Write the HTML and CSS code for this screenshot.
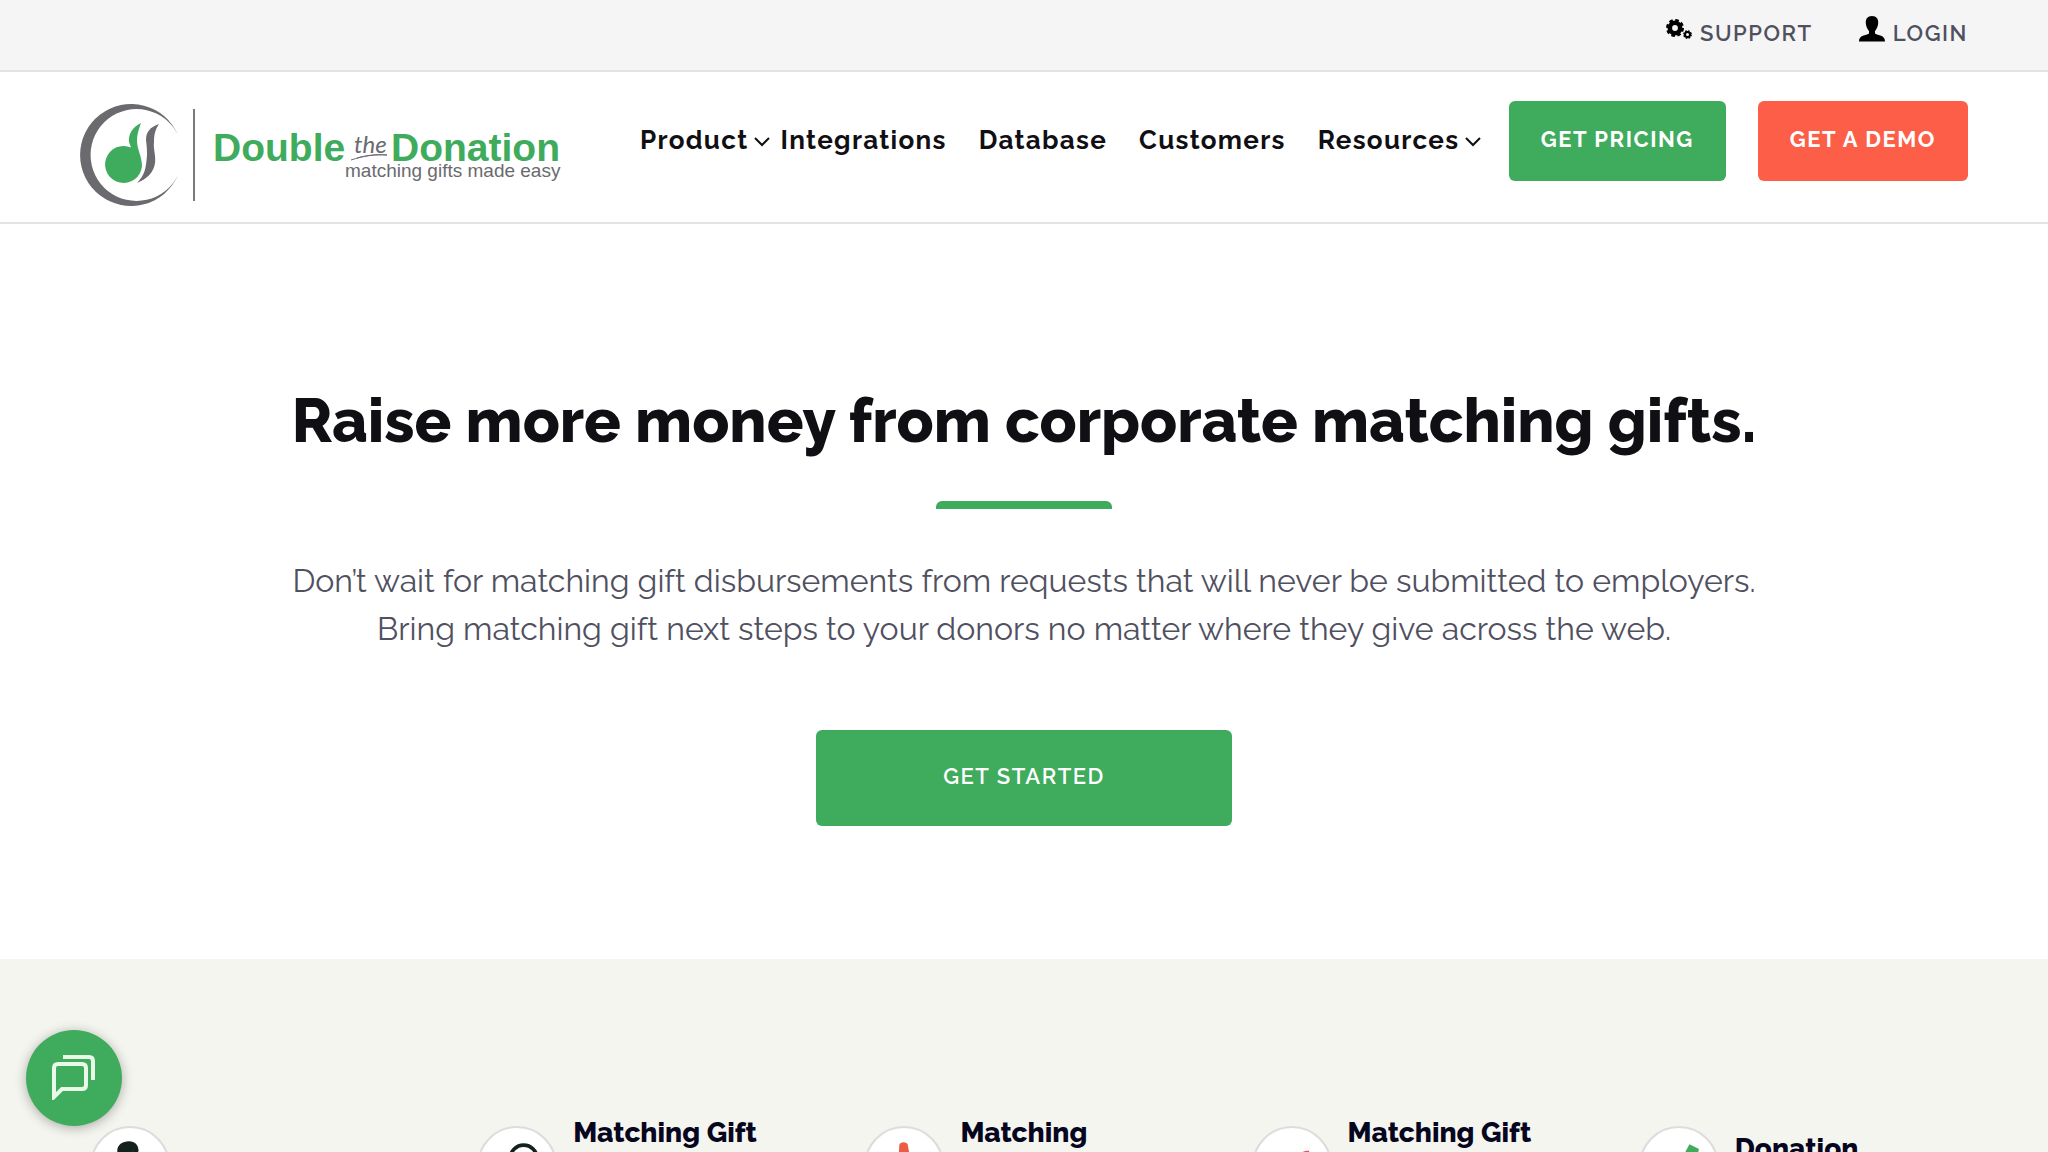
FILE: index.html
```html
<!DOCTYPE html>
<html lang="en">
<head>
    <meta charset="utf-8">
    <title>Double the Donation</title>
    <link rel="stylesheet" href="styles.css">
</head>
<body>

<!-- top bar -->
<div class="topbar">
    <a class="topbar-link" href="#">
        <svg class="icon-gears" viewBox="0 0 26 20" aria-hidden="true">
            <circle cx="9" cy="9" r="5.2" fill="none" stroke="#000" stroke-width="4.6"/>
            <circle cx="9" cy="9" r="7.5" fill="none" stroke="#000" stroke-width="3" stroke-dasharray="3.5 2.39"/>
            <circle cx="21.5" cy="15.5" r="2.5" fill="none" stroke="#000" stroke-width="2"/>
            <circle cx="21.5" cy="15.5" r="3.6" fill="none" stroke="#000" stroke-width="1.6" stroke-dasharray="1.7 1.13"/>
        </svg>
        SUPPORT
    </a>
    <a class="topbar-link" href="#">
        <svg class="icon-user" viewBox="0 0 26 26" aria-hidden="true">
            <path d="M13 0C8.500 0 6.500 3 6.800 7c.2 3.500 1.500 6 3.200 8v2.500C7 20 0 18.500 0 25.500h26c0-7-7-5.500-10-8V15c1.700-2 3-4.500 3.200-8C19.500 3 17.500 0 13 0z"/>
        </svg>
        LOGIN
    </a>
</div>

<!-- header -->
<header class="header">
    <a class="logo" href="#" aria-label="Double the Donation">
        <svg class="logo-svg" viewBox="0 0 484 104" aria-hidden="true">
            <path d="M98 31A51 51 0 1 0 98 71A46 46 0 1 1 98 31z" fill="#6b6a6e"/>
            <path d="M61 19C52 23 48 31 49 38l2 5.500A18.500 18.500 0 1 0 62 62C62 52 57 46 57 36c0-6 2-11 4-17z" fill="#3fab5d"/>
            <path d="M79 20c-9 3-13 8-13 16 1 8 1 10 1 15-1 13-2 20-10 28 10-4 17-11 18-20 1-8-2-14-1-21 0-7 1-12 5-18z" fill="#6b6a6e"/>
            <path d="M114 5v92" stroke="#7b7b7e" stroke-width="2"/>
            <text class="logo-name" x="133" y="57">Double</text>
            <text class="logo-the" x="274" y="49">the</text>
            <path d="M271 56c12-4 24-6 36-5-12-1-23 1-30 3" fill="none" stroke="#6b6a6e"/>
            <text class="logo-name" x="311" y="57">Donation</text>
            <text class="logo-tag" x="265" y="73">matching gifts made easy</text>
        </svg>
    </a>
    <nav class="nav">
        <a class="nav-link nav-drop" href="#">Product
            <svg class="icon-chevron" viewBox="0 0 16 10" aria-hidden="true"><path d="M1 1l7 7 7-7"/></svg>
        </a>
        <a class="nav-link" href="#">Integrations</a>
        <a class="nav-link" href="#">Database</a>
        <a class="nav-link" href="#">Customers</a>
        <a class="nav-link nav-drop" href="#">Resources
            <svg class="icon-chevron" viewBox="0 0 16 10" aria-hidden="true"><path d="M1 1l7 7 7-7"/></svg>
        </a>
    </nav>
    <div class="header-buttons">
        <a class="btn" href="#">GET PRICING</a>
        <a class="btn btn-demo" href="#">GET A DEMO</a>
    </div>
</header>

<!-- hero -->
<section class="hero">
    <h1 class="hero-title">Raise more money from corporate matching gifts.</h1>
    <div class="hero-line"></div>
    <p class="hero-text">Don’t wait for matching gift disbursements from requests that will never be submitted to employers.<br>
        Bring matching gift next steps to your donors no matter where they give across the web.</p>
    <a class="btn btn-start" href="#">GET STARTED</a>
</section>

<!-- features -->
<section class="features">
    <div class="feature">
        <span class="feature-icon">
            <svg viewBox="0 0 80 80" aria-hidden="true">
                <path d="M27 27c-2-8 4-13 12-13 6 0 10 4 10 10l-3 8c0-4-1-6-3-7-4 2-7 1-11 2l-2 7z" fill="#14211f"/>
            </svg>
        </span>
    </div>
    <div class="feature">
        <span class="feature-icon">
            <svg viewBox="0 0 80 80" aria-hidden="true">
                <circle cx="47" cy="32" r="14" fill="none" stroke="#14211f" stroke-width="4"/>
            </svg>
        </span>
        <h2 class="feature-title">Matching Gift</h2>
    </div>
    <div class="feature">
        <span class="feature-icon">
            <svg viewBox="0 0 80 80" aria-hidden="true">
                <path d="M34 40l1-22c1-4 8-4 9 0l4 22z" fill="#ec5c45"/>
            </svg>
        </span>
        <h2 class="feature-title">Matching</h2>
    </div>
    <div class="feature">
        <span class="feature-icon">
            <svg viewBox="0 0 80 80" aria-hidden="true">
                <path d="M42 34c3-6 8-10 16-10v10z" fill="#e0505a"/>
            </svg>
        </span>
        <h2 class="feature-title">Matching Gift</h2>
    </div>
    <div class="feature feature-single">
        <span class="feature-icon">
            <svg viewBox="0 0 80 80" aria-hidden="true">
                <path d="M42 34l9-17 10 5-3 14z" fill="#3fab5d"/>
            </svg>
        </span>
        <h2 class="feature-title">Donation</h2>
    </div>
</section>

<button class="chat" type="button" aria-label="Open chat">
    <svg class="icon-chat" viewBox="0 0 46 46" aria-hidden="true">
        <path d="M3 43V14q0-4 4-4h24q4 0 4 4v17q0 4-4 4H11z"/>
        <path d="M12 3h26q4 0 4 4v19"/>
    </svg>
</button>

</body>
</html>
```
FILE: styles.css
```css
*{box-sizing: border-box;}

body{
    margin: 0px;background: #fff;
    font-family: "Raleway", "Lato", "Open Sans", sans-serif;
    display: flex;flex-direction: column;
    height: 100vh;overflow: hidden;
}
a{text-decoration: none;}

/* top bar */
.topbar{
    flex: none;
    padding: 15px 80px 19px;
    display: flex;justify-content: flex-end;align-items: center;gap: 46px;
    background: #f5f5f5;border-bottom: 2px solid #e3e3e3;
}
.topbar-link{
    display: flex;align-items: center;gap: 8px;
    font-size: 22px;line-height: 36px;font-weight: 600;letter-spacing: 0.07em;color: #50505f;
}
.icon-gears{width: 26px;height: 20px;margin-bottom: 8px;}
.icon-user{width: 26px;height: 26px;margin-bottom: 8px;}

/* header */
.header{
    flex: none;
    padding: 29px 80px 14px;
    display: flex;align-items: flex-start;
    border-bottom: 2px solid #e3e3e3;
}
.logo{padding-top: 3px;}
.logo-svg{display: block;width: 484px;height: 104px;}
.logo-name{font: bold 39px "Liberation Sans", sans-serif;fill: #3fab5d;}
.logo-the{font: italic 24px "Lato", sans-serif;fill: #6b6a6e;}
.logo-tag{font: 19px "Liberation Sans", sans-serif;fill: #6b6a6e;}

.nav{display: flex;gap: 32px;margin-left: 76px;padding-top: 23px;}
.nav-link{
    display: flex;align-items: center;gap: 6px;
    font-size: 26px;line-height: 32px;font-weight: bold;letter-spacing: 0.05em;color: #101014;
}
.nav-drop{margin-right: -22px;}
.icon-chevron{width: 16px;height: 10px;margin-top: 4px;fill: none;stroke: #101014;stroke-width: 2;}

.header-buttons{display: flex;gap: 32px;margin-left: auto;}

/* buttons */
.btn{
    display: block;padding: 0px 32px 4px;line-height: 76px;
    border-radius: 6px;background: #3fab5d;
    font-size: 22px;font-weight: bold;letter-spacing: 0.07em;color: #fff;
}
.btn-demo{background: #fd5e48;}

/* hero */
.hero{
    flex: none;
    padding: 158px 80px 133px;
    display: flex;flex-direction: column;align-items: center;
    text-align: center;
}
.hero-title{margin: 0px;font-size: 61px;line-height: 78px;font-weight: 800;color: #101014;}
.hero-line{
    width: 176px;height: 8px;margin: 41px 0px 48px;
    border-radius: 6px 6px 0px 0px;background: #3fab5d;
}
.hero-text{margin: 0px 0px 77px;font-size: 32px;line-height: 48px;color: #50505f;}
.btn-start{width: 416px;line-height: 92px;font-weight: 600;}

/* features */
.features{
    flex: 1;min-height: 0px;overflow: hidden;
    padding: 158px 22px 0px 90px;
    display: grid;grid-template-columns: repeat(5, 1fr);
    background: #f4f5ee;
}
.feature{display: flex;align-items: flex-start;gap: 16px;}
.feature-icon{
    width: 80px;height: 80px;margin-top: 9px;
    border: 2px solid #dddddd;border-radius: 50%;background: #fff;
}
.feature-title{margin: 0px;font-size: 28px;line-height: 32px;font-weight: 800;color: #06061f;}
.feature-single .feature-title{margin-top: 16px;}

/* chat */
.chat{
    position: fixed;left: 26px;bottom: 26px;
    width: 96px;height: 96px;padding: 0px;
    border: none;border-radius: 50%;background: #3fab5d;
    box-shadow: 0px 2px 12px rgba(0,0,0,0.3);
}
.icon-chat{width: 46px;height: 46px;fill: none;stroke: #e8f9e8;stroke-width: 4;}
```
